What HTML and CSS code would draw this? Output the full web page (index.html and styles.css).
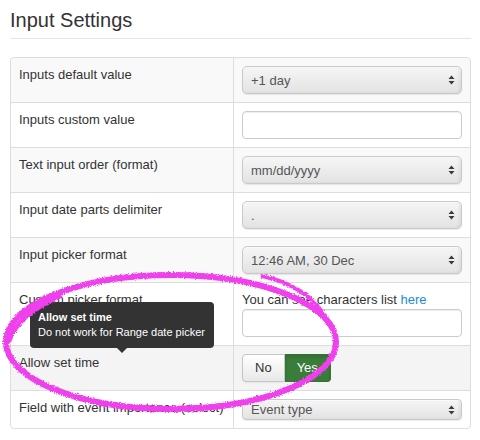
FILE: index.html
```html
<!DOCTYPE html>
<html>
<head>
<meta charset="utf-8">
<title>Input Settings</title>
<link rel="stylesheet" href="styles.css">
</head>
<body>
<div class="page">
  <h2 class="legend">Input Settings</h2>
  <table class="settings">
    <tr class="odd">
      <td class="label">Inputs default value</td>
      <td class="control">
        <div class="select-wrap">
          <select class="select"><option>+1 day</option></select>
          <svg class="caret" width="7" height="10" viewBox="0 0 7 10"><path d="M3.5 0.5 L6.5 4 L0.5 4 Z M0.5 6 L6.5 6 L3.5 9.5 Z" fill="#3a3a3a"/></svg>
        </div>
      </td>
    </tr>
    <tr>
      <td class="label">Inputs custom value</td>
      <td class="control"><input class="text" type="text"></td>
    </tr>
    <tr class="odd">
      <td class="label">Text input order (format)</td>
      <td class="control">
        <div class="select-wrap">
          <select class="select"><option>mm/dd/yyyy</option></select>
          <svg class="caret" width="7" height="10" viewBox="0 0 7 10"><path d="M3.5 0.5 L6.5 4 L0.5 4 Z M0.5 6 L6.5 6 L3.5 9.5 Z" fill="#3a3a3a"/></svg>
        </div>
      </td>
    </tr>
    <tr>
      <td class="label">Input date parts delimiter</td>
      <td class="control">
        <div class="select-wrap">
          <select class="select"><option>.</option></select>
          <svg class="caret" width="7" height="10" viewBox="0 0 7 10"><path d="M3.5 0.5 L6.5 4 L0.5 4 Z M0.5 6 L6.5 6 L3.5 9.5 Z" fill="#3a3a3a"/></svg>
        </div>
      </td>
    </tr>
    <tr class="odd">
      <td class="label">Input picker format</td>
      <td class="control">
        <div class="select-wrap">
          <select class="select"><option>12:46 AM, 30 Dec</option></select>
          <svg class="caret" width="7" height="10" viewBox="0 0 7 10"><path d="M3.5 0.5 L6.5 4 L0.5 4 Z M0.5 6 L6.5 6 L3.5 9.5 Z" fill="#3a3a3a"/></svg>
        </div>
      </td>
    </tr>
    <tr>
      <td class="label">Custom picker format</td>
      <td class="control">
        <div class="hint">You can see characters list <a href="#">here</a></div>
        <input class="text" type="text">
      </td>
    </tr>
    <tr class="hover">
      <td class="label">Allow set time</td>
      <td class="control">
        <div class="btn-group">
          <span class="btn">No</span><span class="btn btn-yes">Yes</span>
        </div>
      </td>
    </tr>
    <tr>
      <td class="label">Field with event importance (select)</td>
      <td class="control">
        <div class="select-wrap">
          <select class="select select-small"><option>Event type</option></select>
          <svg class="caret" width="7" height="10" viewBox="0 0 7 10"><path d="M3.5 0.5 L6.5 4 L0.5 4 Z M0.5 6 L6.5 6 L3.5 9.5 Z" fill="#3a3a3a"/></svg>
        </div>
      </td>
    </tr>
  </table>

  <div class="tooltip">
    <div class="tooltip-title">Allow set time</div>
    <div class="tooltip-body">Do not work for Range date picker</div>
  </div>

  <svg class="annotation" width="480" height="440" viewBox="0 0 480 440">
    <defs>
      <filter id="rough" x="-10%" y="-10%" width="120%" height="120%">
        <feTurbulence type="fractalNoise" baseFrequency="0.9" numOctaves="2" seed="3" result="noise"/>
        <feDisplacementMap in="SourceGraphic" in2="noise" scale="3.5" xChannelSelector="R" yChannelSelector="G"/>
      </filter>
    </defs>
    <g filter="url(#rough)" fill="none" stroke="#f03fee" stroke-linecap="round">
      <ellipse cx="171" cy="342" rx="165" ry="67" stroke-width="6"/>
      <path d="M60 296 C 35 307, 16 322, 9 340" stroke-width="5"/>
      <path d="M262 276 C 290 282, 312 296, 322 312" stroke-width="4"/>
    </g>
  </svg>
</div>
</body>
</html>
```

FILE: styles.css
```css
html, body {
  margin: 0;
  padding: 0;
  background: #ffffff;
}

body {
  font-family: "Liberation Sans", Arial, Helvetica, sans-serif;
  font-size: 13px;
  line-height: 18px;
  color: #333333;
}

.page {
  position: relative;
  width: 480px;
  height: 440px;
  padding: 0 10px;
  box-sizing: border-box;
  overflow: hidden;
}

.legend {
  margin: 0 0 18px 0;
  padding: 2px 0 0 0;
  width: 461px;
  font-size: 20px;
  font-weight: normal;
  line-height: 36px;
  color: #333333;
  border-bottom: 1px solid #e5e5e5;
}

.settings {
  width: 461px;
  border-collapse: separate;
  border-spacing: 0;
  border: 1px solid #dddddd;
  border-radius: 4px;
  table-layout: fixed;
}

.settings td {
  padding: 8px;
  vertical-align: top;
  border-top: 1px solid #dddddd;
}

.settings tr:first-child td {
  border-top: 0;
}

.settings td.label {
  width: 206px;
}

.settings td.control {
  border-left: 1px solid #dddddd;
}

.settings tr.odd td {
  background: #f9f9f9;
}

.settings tr.hover td {
  background: #f4f4f4;
}

.settings tr:first-child td.label {
  border-top-left-radius: 4px;
}

.settings tr:first-child td.control {
  border-top-right-radius: 4px;
}

.settings tr:last-child td.label {
  border-bottom-left-radius: 4px;
}

.settings tr:last-child td.control {
  border-bottom-right-radius: 4px;
}

.select-wrap {
  position: relative;
  width: 220px;
}

.select {
  display: block;
  -webkit-appearance: none;
  appearance: none;
  width: 220px;
  height: 28px;
  margin: 0;
  padding: 0 20px 0 8px;
  font-family: "Liberation Sans", Arial, Helvetica, sans-serif;
  font-size: 13px;
  color: #555555;
  border: 1px solid #c9c9c9;
  border-radius: 5px;
  background: linear-gradient(to bottom, #f6f6f6 0%, #ececec 50%, #e3e3e3 100%);
  box-shadow: inset 0 1px 0 rgba(255, 255, 255, 0.6), inset -2px 0 3px rgba(0, 0, 0, 0.06), 0 1px 1px rgba(0, 0, 0, 0.08);
  outline: none;
}

.select-small {
  height: 21px;
  padding-top: 0;
  padding-bottom: 0;
  border-radius: 4px;
}

.caret {
  position: absolute;
  right: 7px;
  top: 50%;
  margin-top: -5px;
  pointer-events: none;
}

.text {
  display: block;
  box-sizing: border-box;
  width: 220px;
  height: 28px;
  margin: 0;
  padding: 4px 6px;
  font-family: "Liberation Sans", Arial, Helvetica, sans-serif;
  font-size: 13px;
  color: #555555;
  background: #ffffff;
  border: 1px solid #cccccc;
  border-radius: 4px;
  box-shadow: inset 0 1px 1px rgba(0, 0, 0, 0.075);
  outline: none;
}

.hint {
  color: #333333;
}

.hint a {
  color: #1a8bd2;
  text-decoration: none;
}

.btn-group {
  display: flex;
}

.btn {
  display: flex;
  align-items: center;
  justify-content: center;
  box-sizing: border-box;
  height: 28px;
  padding: 0 12px;
  font-size: 13px;
  color: #333333;
  border: 1px solid #c5c5c5;
  background: linear-gradient(to bottom, #ffffff, #e8e8e8);
  border-radius: 4px 0 0 4px;
  box-shadow: inset 0 1px 0 rgba(255, 255, 255, 0.3), 0 1px 2px rgba(0, 0, 0, 0.06);
}

.btn-yes {
  color: #ffffff;
  background: #3a7d3a;
  border-color: #357035;
  border-left: 0;
  border-radius: 0 4px 4px 0;
  box-shadow: inset 0 2px 4px rgba(0, 0, 0, 0.15);
}

.tooltip {
  position: absolute;
  left: 30px;
  top: 302px;
  width: 184px;
  box-sizing: border-box;
  padding: 8px;
  font-size: 11px;
  line-height: 15px;
  color: #ffffff;
  background: #333333;
  border-radius: 4px;
}

.tooltip::after {
  content: "";
  position: absolute;
  left: 50%;
  bottom: -5px;
  margin-left: -5px;
  border-left: 5px solid transparent;
  border-right: 5px solid transparent;
  border-top: 5px solid #333333;
}

.tooltip-title {
  font-weight: bold;
}

.annotation {
  position: absolute;
  left: 0;
  top: 0;
  pointer-events: none;
}
```
